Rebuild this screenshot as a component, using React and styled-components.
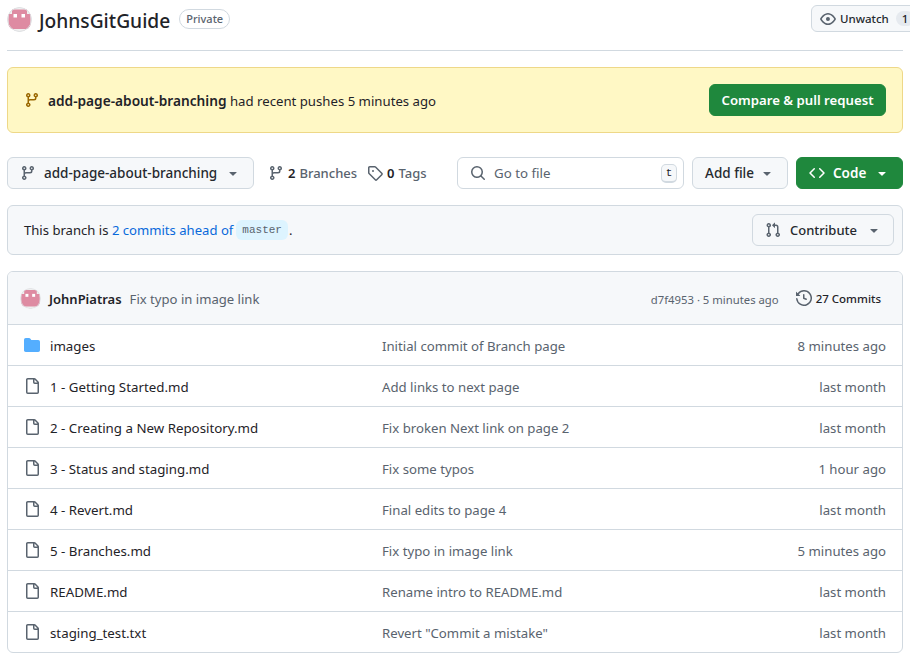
import styled, { createGlobalStyle } from "styled-components"

const GlobalStyle = createGlobalStyle`
  html, body {
    margin: 0;
    padding: 0;
    width: 910px;
    height: 659px;
    overflow: hidden;
    background: #fff;
  }
  body {
    font-family: "Noto Sans", "Open Sans", sans-serif;
    font-size: 13.3px;
    color: #1f2328;
  }
`

const Pagina = styled.div`
  width: 896px;
  padding: 0 7px;
  display: flex;
  flex-direction: column;
`

const Cabecalho = styled.header`
  height: 50px;
  display: flex;
  align-items: flex-start;
  border-bottom: 1px solid #d1d9e0;
`

const Titulo = styled.div`
  flex: 0 0 804px;
  height: 38px;
  display: flex;
  align-items: center;
  gap: 7px;
`

const Avatar = styled.svg`
  width: ${(p) => p.$tam}px;
  height: ${(p) => p.$tam}px;
  border-radius: 50%;
  flex-shrink: 0;
`

const NomeRepo = styled.span`
  font-size: 19.2px;
  font-weight: 500;
  padding-top: 2px;
`

const Selo = styled.span`
  margin-left: 2px;
  border: 1px solid #d1d9e0;
  border-radius: 10px;
  height: 18px;
  line-height: 18px;
  padding: 0 6px;
  font-size: 11px;
  font-weight: 500;
  color: #59636e;
`

const Botao = styled.div`
  box-sizing: border-box;
  height: 32px;
  display: flex;
  flex-shrink: 0;
  align-items: center;
  gap: ${(p) => p.$gap || 8}px;
  padding: 0 12px;
  margin-left: ${(p) => p.$margem || 0}px;
  border-radius: 6px;
  border: 1px solid ${(p) => (p.$verde ? "#1f883d" : "#d1d9e0")};
  background: ${(p) => (p.$verde ? "#1f883d" : "#f6f8fa")};
  color: ${(p) => (p.$verde ? "#fff" : "#25292e")};
  font-size: 13.5px;
  font-weight: ${(p) => (p.$verde ? 600 : 500)};
  white-space: nowrap;
`

const BotaoVigiar = styled(Botao)`
  margin-top: 5px;
  height: 27px;
  padding: 0 8px;
  font-size: 11.5px;
  gap: 4px;
`

const BotaoComparar = styled(Botao)`
  font-size: 13.2px;
  width: 177px;
  justify-content: center;
`

const BotaoCodigo = styled(Botao)`
  width: 107px;
  padding: 0 12px;
  gap: 8px;
`

const BotaoContribuir = styled(Botao)`
  width: 142px;
  font-size: 13px;
  gap: 9px;
`

const Contador = styled.span`
  background: #e6eaef;
  border-radius: 10px;
  padding: 0 6px;
  margin-left: 3px;
  color: #1f2328;
`

const Aviso = styled.div`
  box-sizing: border-box;
  margin-top: 16px;
  height: 66px;
  display: flex;
  align-items: center;
  justify-content: space-between;
  padding: 0 16px;
  background: #fff8c5;
  border: 1px solid #eed888;
  border-radius: 6px;
`

const AvisoTexto = styled.div`
  display: flex;
  align-items: center;
  gap: 8px;
  font-size: 13.2px;
  color: #1f2328;

  strong {
    font-size: 13.7px;
    font-weight: 600;
  }
`

const BarraRamo = styled.div`
  margin-top: 24px;
  display: flex;
  align-items: center;
`

const BotaoRamo = styled(Botao)`
  width: 247px;
  padding: 0 12px;
  gap: 8px;
`

const NomeRamo = styled.span`
  flex: 1;
`

const Contagens = styled.div`
  display: flex;
  align-items: center;
  gap: 10px;
  margin-left: 14px;
  flex: 1;
`

const Contagem = styled.span`
  display: flex;
  align-items: center;
  gap: 4px;
  color: #59636e;
  font-size: 13px;
  font-weight: 500;

  b {
    color: #1f2328;
    font-weight: 600;
  }
`

const Busca = styled.div`
  box-sizing: border-box;
  width: 227px;
  height: 32px;
  display: flex;
  align-items: center;
  gap: 8px;
  padding: 0 6px 0 12px;
  border: 1px solid #d1d9e0;
  border-radius: 6px;
  color: #59636e;
  margin-right: 8px;
`

const BuscaTexto = styled.span`
  flex: 1;
`

const Tecla = styled.kbd`
  box-sizing: border-box;
  width: 16px;
  height: 19px;
  display: flex;
  align-items: center;
  justify-content: center;
  background: #f6f8fa;
  border: 1px solid #d1d9e0;
  border-bottom-width: 2px;
  border-radius: 5px;
  font-family: "Liberation Mono", monospace;
  font-size: 11px;
  color: #1f2328;
`

const CaixaRamo = styled.div`
  box-sizing: border-box;
  margin-top: 16px;
  height: 50px;
  display: flex;
  align-items: center;
  justify-content: space-between;
  padding: 0 8px 0 16px;
  background: #f6f8fa;
  border: 1px solid #d1d9e0;
  border-radius: 6px;
`

const Frase = styled.div`
  display: flex;
  align-items: center;
  font-size: 13.1px;
  white-space: pre;
`

const Link = styled.span`
  color: #0969da;
`

const RamoBase = styled.code`
  font-family: "Liberation Mono", monospace;
  font-size: 11px;
  color: #59636e;
  background: #ddf4ff;
  border-radius: 6px;
  padding: 4px 6px;
  margin: 0 1px 0 3px;
`

const TabelaArquivos = styled.div`
  box-sizing: border-box;
  margin-top: 16px;
  border: 1px solid #d1d9e0;
  border-radius: 6px;
  overflow: hidden;
`

const LinhaCommit = styled.div`
  box-sizing: border-box;
  height: 53px;
  display: flex;
  align-items: center;
  padding: 0 21px 0 12px;
  background: #f6f8fa;
  border-bottom: 1px solid #d1d9e0;
`

const Autor = styled.span`
  margin-left: 8px;
  padding-top: 2px;
  font-size: 13px;
  font-weight: 600;
`

const Mensagem = styled.span`
  margin-left: 8px;
  padding-top: 2px;
  color: #59636e;
  font-size: 13.1px;
  flex: 1;
`

const Hash = styled.span`
  color: #59636e;
  padding-top: 2px;
  font-size: 11.3px;
`

const Commits = styled.span`
  display: flex;
  align-items: center;
  gap: 4px;
  margin-left: 17px;
  font-size: 11.5px;
  font-weight: 500;
`

const Linha = styled.div`
  box-sizing: border-box;
  height: 41px;
  display: grid;
  grid-template-columns: 358px 1fr auto;
  align-items: center;
  padding: 0 16px;
  border-bottom: 1px solid #d1d9e0;

  &:last-child {
    height: 40px;
    border-bottom: 0;
  }
`

const NomeArquivo = styled.span`
  display: flex;
  align-items: center;
  gap: 10px;
  color: #1f2328;
`

const RotuloArquivo = styled.span`
  padding-top: 2px;
`

const TextoClaro = styled.span`
  color: #59636e;
  font-size: 13.2px;
  padding-top: 2px;
`

const Icone = ({ d, cor = "#59636e", tam = 16 }) => (
  <svg width={tam} height={tam} viewBox="0 0 16 16" fill={cor} style={{ flexShrink: 0 }}>
    <path d={d} />
  </svg>
)

const Seta = ({ cor = "#59636e" }) => (
  <svg width="16" height="16" viewBox="0 0 16 16" fill={cor} style={{ flexShrink: 0 }}>
    <path d="m4.427 7.427 3.396 3.396a.25.25 0 0 0 .354 0l3.396-3.396A.25.25 0 0 0 11.396 7H4.604a.25.25 0 0 0-.177.427Z" />
  </svg>
)

const Robo = ({ tam }) => (
  <Avatar $tam={tam} viewBox="0 0 25 25">
    <circle cx="12.5" cy="12.5" r="12.5" fill="#f0f0f0" />
    <path d="M5 2.5h15v4.5h3.5v15h-22V7H5Z" fill="#de8ba2" />
    <rect x="6.5" y="7" width="3.5" height="3.5" fill="#fff" />
    <rect x="14.5" y="7" width="3.5" height="3.5" fill="#fff" />
    <circle cx="12.5" cy="12.5" r="12" fill="none" stroke="#dcdee1" strokeWidth="1" />
  </Avatar>
)

const iconeRamo = "M9.5 3.25a2.25 2.25 0 1 1 3 2.122V6A2.5 2.5 0 0 1 10 8.5H6a1 1 0 0 0-1 1v1.128a2.251 2.251 0 1 1-1.5 0V5.372a2.25 2.25 0 1 1 1.5 0v1.836A2.493 2.493 0 0 1 6 7h4a1 1 0 0 0 1-1v-.628A2.25 2.25 0 0 1 9.5 3.25Zm-6 0a.75.75 0 1 0 1.5 0 .75.75 0 0 0-1.5 0Zm8.25-.75a.75.75 0 1 0 0 1.5.75.75 0 0 0 0-1.5ZM4.25 12a.75.75 0 1 0 0 1.5.75.75 0 0 0 0-1.5Z"
const iconeTag = "M1 7.775V2.75C1 1.784 1.784 1 2.75 1h5.025c.464 0 .91.184 1.238.513l6.25 6.25a1.75 1.75 0 0 1 0 2.474l-5.026 5.026a1.75 1.75 0 0 1-2.474 0l-6.25-6.25A1.752 1.752 0 0 1 1 7.775Zm1.5 0c0 .066.026.13.073.177l6.25 6.25a.25.25 0 0 0 .354 0l5.025-5.025a.25.25 0 0 0 0-.354l-6.25-6.25a.25.25 0 0 0-.177-.073H2.75a.25.25 0 0 0-.25.25ZM6 5a1 1 0 1 1 0 2 1 1 0 0 1 0-2Z"
const iconeOlho = "M8 2c1.981 0 3.671.992 4.933 2.078 1.27 1.091 2.187 2.345 2.637 3.023a1.62 1.62 0 0 1 0 1.798c-.45.678-1.367 1.932-2.637 3.023C11.67 13.008 9.981 14 8 14c-1.981 0-3.671-.992-4.933-2.078C1.797 10.83.88 9.576.43 8.898a1.62 1.62 0 0 1 0-1.798c.45-.677 1.367-1.931 2.637-3.022C4.33 2.992 6.019 2 8 2ZM1.679 7.932a.12.12 0 0 0 0 .136c.411.622 1.241 1.75 2.366 2.717C5.176 11.758 6.527 12.5 8 12.5c1.473 0 2.825-.742 3.955-1.715 1.124-.967 1.954-2.096 2.366-2.717a.12.12 0 0 0 0-.136c-.412-.621-1.242-1.75-2.366-2.717C10.824 4.242 9.473 3.5 8 3.5c-1.473 0-2.825.742-3.955 1.715-1.124.967-1.954 2.096-2.366 2.717ZM8 10a2 2 0 1 1-.001-3.999A2 2 0 0 1 8 10Z"
const iconeBusca = "M10.68 11.74a6 6 0 0 1-7.922-8.982 6 6 0 0 1 8.982 7.922l3.04 3.04a.749.749 0 0 1-.326 1.275.749.749 0 0 1-.734-.215ZM11.5 7a4.499 4.499 0 1 0-8.997 0A4.499 4.499 0 0 0 11.5 7Z"
const iconeCodigo = "m11.28 3.22 4.25 4.25a.75.75 0 0 1 0 1.06l-4.25 4.25a.749.749 0 0 1-1.275-.326.749.749 0 0 1 .215-.734L13.94 8l-3.72-3.72a.749.749 0 0 1 .326-1.275.749.749 0 0 1 .734.215Zm-6.56 0a.751.751 0 0 1 1.042.018.751.751 0 0 1 .018 1.042L2.06 8l3.72 3.72a.749.749 0 0 1-.326 1.275.749.749 0 0 1-.734-.215L.47 8.53a.75.75 0 0 1 0-1.06Z"
const iconePull = "M1.5 3.25a2.25 2.25 0 1 1 3 2.122v5.256a2.251 2.251 0 1 1-1.5 0V5.372A2.25 2.25 0 0 1 1.5 3.25Zm5.677-.177L9.573.677A.25.25 0 0 1 10 .854V2.5h1A2.5 2.5 0 0 1 13.5 5v5.628a2.251 2.251 0 1 1-1.5 0V5a1 1 0 0 0-1-1h-1v1.646a.25.25 0 0 1-.427.177L7.177 3.427a.25.25 0 0 1 0-.354ZM3.75 2.5a.75.75 0 1 0 0 1.5.75.75 0 0 0 0-1.5Zm0 9.5a.75.75 0 1 0 0 1.5.75.75 0 0 0 0-1.5Zm8.25.75a.75.75 0 1 0 1.5 0 .75.75 0 0 0-1.5 0Z"
const iconeHistorico = "m.427 1.927 1.215 1.215a8.002 8.002 0 1 1-1.6 5.685.75.75 0 1 1 1.493-.154 6.5 6.5 0 1 0 1.18-4.458l1.358 1.358A.25.25 0 0 1 3.896 6H.25A.25.25 0 0 1 0 5.75V2.104a.25.25 0 0 1 .427-.177ZM7.75 4a.75.75 0 0 1 .75.75v2.992l2.028.812a.75.75 0 0 1-.557 1.392l-2.5-1A.751.751 0 0 1 7 8.25v-3.5A.75.75 0 0 1 7.75 4Z"
const iconeArquivo = "M2 1.75C2 .784 2.784 0 3.75 0h6.586c.464 0 .909.184 1.237.513l2.914 2.914c.329.328.513.773.513 1.237v9.586A1.75 1.75 0 0 1 13.25 16h-9.5A1.75 1.75 0 0 1 2 14.25Zm1.75-.25a.25.25 0 0 0-.25.25v12.5c0 .138.112.25.25.25h9.5a.25.25 0 0 0 .25-.25V6h-2.75A1.75 1.75 0 0 1 9 4.25V1.5Zm6.75.062V4.25c0 .138.112.25.25.25h2.688l-.011-.013-2.914-2.914-.013-.011Z"
const iconePasta = "M1.75 1A1.75 1.75 0 0 0 0 2.75v10.5C0 14.216.784 15 1.75 15h12.5A1.75 1.75 0 0 0 16 13.25v-8.5A1.75 1.75 0 0 0 14.25 3H7.5a.25.25 0 0 1-.2-.1l-.9-1.2C6.07 1.26 5.55 1 5 1H1.75Z"

const arquivos = [
  { nome: "images", msg: "Initial commit of Branch page", quando: "8 minutes ago", pasta: true },
  { nome: "1 - Getting Started.md", msg: "Add links to next page", quando: "last month" },
  { nome: "2 - Creating a New Repository.md", msg: "Fix broken Next link on page 2", quando: "last month" },
  { nome: "3 - Status and staging.md", msg: "Fix some typos", quando: "1 hour ago" },
  { nome: "4 - Revert.md", msg: "Final edits to page 4", quando: "last month" },
  { nome: "5 - Branches.md", msg: "Fix typo in image link", quando: "5 minutes ago" },
  { nome: "README.md", msg: "Rename intro to README.md", quando: "last month" },
  { nome: "staging_test.txt", msg: 'Revert "Commit a mistake"', quando: "last month" },
]

const App = () => {
  return (
    <Pagina>
      <GlobalStyle />
      <Cabecalho>
        <Titulo>
          <Robo tam={25} />
          <NomeRepo>JohnsGitGuide</NomeRepo>
          <Selo>Private</Selo>
        </Titulo>
        <BotaoVigiar>
          <Icone d={iconeOlho} />
          Unwatch
          <Contador>1</Contador>
        </BotaoVigiar>
      </Cabecalho>

      <Aviso>
        <AvisoTexto>
          <Icone d={iconeRamo} cor="#9a6700" />
          <span><strong>add-page-about-branching</strong> had recent pushes 5 minutes ago</span>
        </AvisoTexto>
        <BotaoComparar $verde>Compare &amp; pull request</BotaoComparar>
      </Aviso>

      <BarraRamo>
        <BotaoRamo>
          <Icone d={iconeRamo} />
          <NomeRamo>add-page-about-branching</NomeRamo>
          <Seta />
        </BotaoRamo>
        <Contagens>
          <Contagem><Icone d={iconeRamo} /><b>2</b> Branches</Contagem>
          <Contagem><Icone d={iconeTag} /><b>0</b> Tags</Contagem>
        </Contagens>
        <Busca>
          <Icone d={iconeBusca} />
          <BuscaTexto>Go to file</BuscaTexto>
          <Tecla>t</Tecla>
        </Busca>
        <Botao $gap={5}>Add file <Seta /></Botao>
        <BotaoCodigo $verde $margem={8}>
          <Icone d={iconeCodigo} cor="#fff" />
          <span>Code</span>
          <Seta cor="#fff" />
        </BotaoCodigo>
      </BarraRamo>

      <CaixaRamo>
        <Frase>
          This branch is <Link>2 commits ahead of</Link> <RamoBase>master</RamoBase>.
        </Frase>
        <BotaoContribuir>
          <Icone d={iconePull} />
          Contribute
          <Seta />
        </BotaoContribuir>
      </CaixaRamo>

      <TabelaArquivos>
        <LinhaCommit>
          <Robo tam={21} />
          <Autor>JohnPiatras</Autor>
          <Mensagem>Fix typo in image link</Mensagem>
          <Hash>d7f4953 · 5 minutes ago</Hash>
          <Commits><Icone d={iconeHistorico} />27 Commits</Commits>
        </LinhaCommit>
        {arquivos.map((a) => (
          <Linha key={a.nome}>
            <NomeArquivo>
              <Icone d={a.pasta ? iconePasta : iconeArquivo} cor={a.pasta ? "#54aeff" : "#59636e"} />
              <RotuloArquivo>{a.nome}</RotuloArquivo>
            </NomeArquivo>
            <TextoClaro>{a.msg}</TextoClaro>
            <TextoClaro>{a.quando}</TextoClaro>
          </Linha>
        ))}
      </TabelaArquivos>
    </Pagina>
  )
}

export default App
